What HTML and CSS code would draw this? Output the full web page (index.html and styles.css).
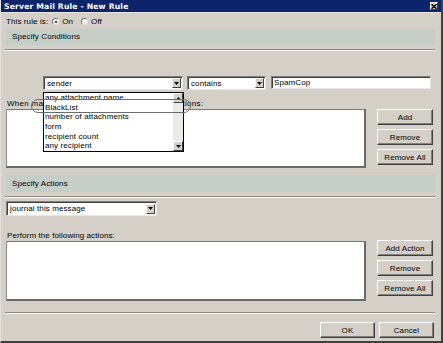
FILE: index.html
```html
<!DOCTYPE html>
<html>
<head>
<meta charset="utf-8">
<title>Server Mail Rule - New Rule</title>
<link rel="stylesheet" href="styles.css">
</head>
<body>
<div class="window">
  <div class="titlebar">
    <span class="title">Server Mail Rule - New Rule</span>
    <span class="close"><svg width="6" height="5" viewBox="0 0 6 5"><path d="M0.5 0.3 L5.5 4.7 M5.5 0.3 L0.5 4.7" stroke="#000" stroke-width="1.5"/></svg></span>
  </div>
  <div class="content">
    <div class="rule-row">
      <span class="rule-label">This rule is:</span>
      <span class="radio checked"></span><span class="radio-label">On</span>
      <span class="radio"></span><span class="radio-label">Off</span>
    </div>
    <div class="band">Specify Conditions</div>
    <div class="groove"></div>

    <div class="cond-row">
      <div class="select-wrap">
        <div class="select sender">
          <span class="select-text">sender</span>
          <span class="arrow-btn"><svg width="5" height="3" viewBox="0 0 5 3"><path d="M0 0H5L2.5 3Z" fill="#000"/></svg></span>
        </div>
        <div class="dropdown">
          <ul class="dropdown-items">
            <li>any attachment name</li>
            <li>BlackList</li>
            <li>number of attachments</li>
            <li>form</li>
            <li>recipient count</li>
            <li>any recipient</li>
          </ul>
          <div class="scrollbar">
            <span class="sb-btn"><svg width="5" height="3" viewBox="0 0 5 3"><path d="M0 3H5L2.5 0Z" fill="#000"/></svg></span>
            <span class="sb-track"></span>
            <span class="sb-btn"><svg width="5" height="3" viewBox="0 0 5 3"><path d="M0 0H5L2.5 3Z" fill="#000"/></svg></span>
          </div>
        </div>
        <div class="oval"></div>
      </div>
      <div class="select contains">
        <span class="select-text">contains</span>
        <span class="arrow-btn"><svg width="5" height="3" viewBox="0 0 5 3"><path d="M0 0H5L2.5 3Z" fill="#000"/></svg></span>
      </div>
      <div class="textbox spam">SpamCop</div>
    </div>

    <div class="label cond-label">When mail matches any of the following conditions:</div>
    <div class="list-row">
      <div class="listbox cond-list"></div>
      <div class="btn-col">
        <button class="btn">Add</button>
        <button class="btn">Remove</button>
        <button class="btn">Remove All</button>
      </div>
    </div>

    <div class="band band-actions">Specify Actions</div>
    <div class="groove"></div>

    <div class="select journal">
      <span class="select-text">journal this message</span>
      <span class="arrow-btn"><svg width="5" height="3" viewBox="0 0 5 3"><path d="M0 0H5L2.5 3Z" fill="#000"/></svg></span>
    </div>

    <div class="label action-label">Perform the following actions:</div>
    <div class="list-row action-row">
      <div class="listbox action-list"></div>
      <div class="btn-col action-btns">
        <button class="btn">Add Action</button>
        <button class="btn">Remove</button>
        <button class="btn">Remove All</button>
      </div>
    </div>

    <div class="groove footer-groove"></div>
    <div class="footer">
      <button class="btn footer-btn">OK</button>
      <button class="btn footer-btn">Cancel</button>
    </div>
  </div>
</div>
</body>
</html>
```

FILE: styles.css
```css
* { box-sizing: border-box; }
html, body { margin: 0; padding: 0; }
body {
  width: 443px;
  height: 343px;
  overflow: hidden;
  background: #d4d0c8;
  font-family: "Liberation Sans", Arial, sans-serif;
  font-size: 8px;
  letter-spacing: 0.1px;
  color: #000;
}
.window {
  width: 443px;
  height: 343px;
  background: #d4d0c8;
  border-left: 1px solid #e4e1dc;
  border-right: 2px solid #404040;
  border-bottom: 2px solid #404040;
  display: flex;
  flex-direction: column;
}
.titlebar {
  height: 13px;
  background: #0c246a;
  border-bottom: 1px solid #e8e6e2;
  display: flex;
  align-items: center;
  justify-content: space-between;
  padding: 0 3px 0 3px;
  color: #fff;
}
.title {
  font-family: "DejaVu Sans", Verdana, sans-serif;
  font-weight: bold;
  font-size: 7.7px;
  letter-spacing: 0.15px;
}
.close {
  width: 8px;
  height: 8px;
  background: #d4d0c8;
  border-top: 1px solid #fff;
  border-left: 1px solid #fff;
  border-right: 1px solid #404040;
  border-bottom: 1px solid #404040;
  display: flex;
  align-items: center;
  justify-content: center;
}
.content {
  flex: 1;
  display: flex;
  flex-direction: column;
  padding: 0 6px 0 4px;
}
.rule-row {
  margin-top: 2px;
  height: 13px;
  display: flex;
  align-items: center;
  padding-left: 1px;
}
.rule-label { margin-right: 4px; }
.radio {
  width: 7px;
  height: 7px;
  border-radius: 50%;
  background: #fff;
  border: 1px solid #707070;
  border-right-color: #e0e0e0;
  border-bottom-color: #e0e0e0;
  position: relative;
  margin-right: 3px;
}
.radio.checked::after {
  content: "";
  position: absolute;
  left: 1.5px;
  top: 1.5px;
  width: 2px;
  height: 2px;
  border-radius: 50%;
  background: #000;
}
.radio-label { margin-right: 8px; }
.band {
  margin-top: 1px;
  height: 16px;
  line-height: 16px;
  background: #c6cec8;
  padding-left: 6px;
  margin-left: 1px;
}
.groove {
  margin-top: 4px;
  height: 2px;
  border-top: 1px solid #8a8782;
  border-bottom: 1px solid #fbfaf8;
}
.cond-row {
  margin-top: 25px;
  display: flex;
  height: 14px;
  position: relative;
  z-index: 2;
}
.select-wrap {
  position: relative;
  margin-left: 38px;
  width: 140px;
}
.select {
  height: 14px;
  background: #fff;
  border-top: 1px solid #808080;
  border-left: 1px solid #808080;
  border-right: 1px solid #e8e6e2;
  border-bottom: 1px solid #e8e6e2;
  box-shadow: inset 1px 1px #404040;
  display: flex;
  align-items: center;
  justify-content: space-between;
  padding: 1px 1px 1px 3px;
}
.sender { width: 140px; }
.contains { width: 79px; margin-left: 4px; }
.arrow-btn {
  width: 9px;
  height: 10px;
  background: #d4d0c8;
  border-top: 1px solid #f4f3f0;
  border-left: 1px solid #f4f3f0;
  border-right: 1px solid #404040;
  border-bottom: 1px solid #404040;
  display: flex;
  align-items: center;
  justify-content: center;
}
.textbox {
  height: 13px;
  background: #fff;
  border-top: 1px solid #808080;
  border-left: 1px solid #808080;
  border-right: 1px solid #e8e6e2;
  border-bottom: 1px solid #e8e6e2;
  box-shadow: inset 1px 1px #404040;
  padding: 0 2px;
  line-height: 11px;
}
.spam { width: 160px; margin-left: 5px; }
.dropdown {
  position: absolute;
  left: 0;
  top: 16px;
  width: 141px;
  height: 60px;
  background: #fff;
  border: 1px solid #000;
  display: flex;
}
.dropdown-items {
  list-style: none;
  margin: 0;
  padding: 0 0 0 1px;
  flex: 1;
}
.dropdown-items li {
  height: 9.7px;
  line-height: 9.7px;
  white-space: nowrap;
}
.scrollbar {
  width: 10px;
  display: flex;
  flex-direction: column;
  background: #eceae6;
}
.sb-btn {
  height: 10px;
  background: #d4d0c8;
  border-top: 1px solid #fff;
  border-left: 1px solid #fff;
  border-right: 1px solid #404040;
  border-bottom: 1px solid #404040;
  display: flex;
  align-items: center;
  justify-content: center;
}
.sb-track { flex: 1; }
.oval {
  position: absolute;
  left: -12px;
  top: 23px;
  width: 160px;
  height: 14px;
  border: 1px solid #6c6c6c;
  border-radius: 7px;
}
.label {
  height: 10px;
  line-height: 10px;
  padding-left: 2px;
  white-space: nowrap;
}
.cond-label { margin-top: 9px; letter-spacing: 0.3px; }
.list-row {
  display: flex;
  align-items: flex-start;
}
.listbox {
  width: 360px;
  background: #fff;
  border-top: 1px solid #7a7a7a;
  border-left: 1px solid #8a8a8a;
  border-right: 2px solid #6a6a6a;
  border-bottom: 2px solid #6a6a6a;
  margin-left: 1px;
}
.cond-list { height: 59px; }
.btn-col {
  margin-left: 11px;
  display: flex;
  flex-direction: column;
  gap: 4px;
}
.btn {
  width: 56px;
  height: 16px;
  padding: 0;
  margin: 0;
  font-family: inherit;
  font-size: 8px;
  letter-spacing: 0.1px;
  color: #000;
  background: #d4d0c8;
  border-top: 1px solid #fff;
  border-left: 1px solid #fff;
  border-right: 1px solid #404040;
  border-bottom: 1px solid #404040;
  box-shadow: inset -1px -1px #808080;
}
.band-actions { margin-top: 7px; height: 17px; line-height: 18px; }
.journal { width: 151px; height: 15px; margin-top: 3px; margin-left: 1px; }
.action-label { margin-top: 15px; }
.action-row { margin-top: 0; }
.action-list { height: 60px; }
.action-btns { margin-top: -1px; }
.footer-groove { margin-top: 11px; }
.footer {
  margin-top: 8px;
  display: flex;
  justify-content: flex-end;
  gap: 4px;
  padding-right: 1px;
}
.footer-btn { width: 55px; }
```
